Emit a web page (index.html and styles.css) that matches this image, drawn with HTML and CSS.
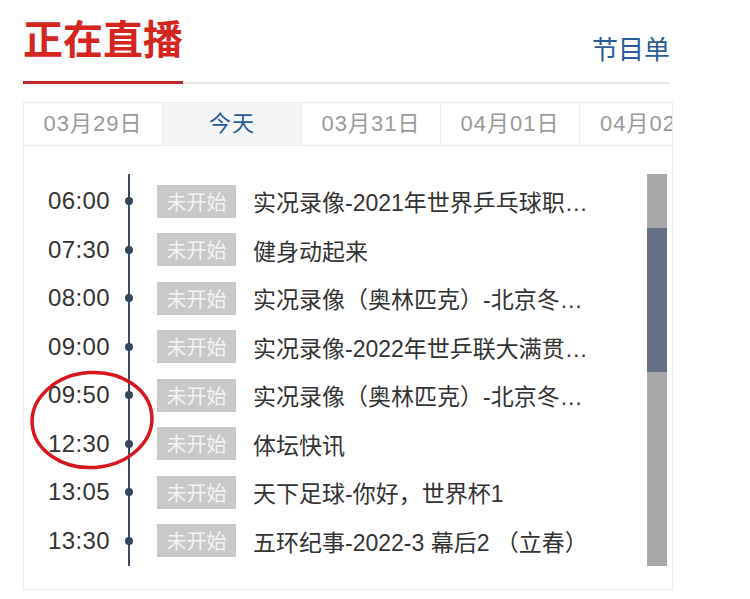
FILE: index.html
```html
<!DOCTYPE html>
<html lang="zh-CN">
<head>
<meta charset="utf-8">
<title>正在直播</title>
<link rel="stylesheet" href="styles.css">
</head>
<body>
<div class="page">
  <header class="header">
    <h1 class="title">正在直播</h1>
    <a class="schedule-link">节目单</a>
  </header>
  <div class="rule">
    <span class="rule-red"></span>
    <span class="rule-gray"></span>
  </div>
  <section class="box">
    <nav class="tabs">
      <div class="tab">03月29日</div>
      <div class="tab tab-active">今天</div>
      <div class="tab">03月31日</div>
      <div class="tab">04月01日</div>
      <div class="tab">04月02日</div>
    </nav>
    <div class="panel">
      <ul class="list">
        <li class="row"><span class="time">06:00</span><span class="dot"></span><span class="badge">未开始</span><span class="name">实况录像-2021年世界乒乓球职业大联盟总决赛</span></li>
        <li class="row"><span class="time">07:30</span><span class="dot"></span><span class="badge">未开始</span><span class="name">健身动起来</span></li>
        <li class="row"><span class="time">08:00</span><span class="dot"></span><span class="badge">未开始</span><span class="name">实况录像（奥林匹克）-北京冬奥会精彩回顾</span></li>
        <li class="row"><span class="time">09:00</span><span class="dot"></span><span class="badge">未开始</span><span class="name">实况录像-2022年世乒联大满贯新加坡站</span></li>
        <li class="row"><span class="time">09:50</span><span class="dot"></span><span class="badge">未开始</span><span class="name">实况录像（奥林匹克）-北京冬奥会精彩回顾</span></li>
        <li class="row"><span class="time">12:30</span><span class="dot"></span><span class="badge">未开始</span><span class="name">体坛快讯</span></li>
        <li class="row"><span class="time">13:05</span><span class="dot"></span><span class="badge">未开始</span><span class="name">天下足球-你好，世界杯1</span></li>
        <li class="row"><span class="time">13:30</span><span class="dot"></span><span class="badge">未开始</span><span class="name">五环纪事-2022-3 幕后2 （立春）</span></li>
      </ul>
      <div class="scrollbar"><div class="thumb"></div></div>
    </div>
  </section>
  <svg class="mark" width="130" height="106" viewBox="0 0 130 106">
    <ellipse cx="63" cy="51" rx="60" ry="47.5" fill="none" stroke="#d8161d" stroke-width="3.5" transform="rotate(-4 63 51)"/>
  </svg>
</div>
</body>
</html>
```
FILE: styles.css
```css
* { box-sizing: border-box; }
html, body { margin: 0; padding: 0; background: #fff; }
body {
  font-family: "Liberation Sans", "Noto Sans CJK SC", sans-serif;
  color: #333;
}
.page {
  position: relative;
  width: 673px;
  padding-left: 23px;
}
.header {
  height: 81px;
  display: flex;
  justify-content: space-between;
  align-items: flex-start;
}
.title {
  margin: 17px 0 0 0;
  font-family: "Noto Sans CJK SC", sans-serif;
  font-size: 40px;
  line-height: 40px;
  font-weight: 700;
  color: #d5251f;
  letter-spacing: 0;
}
.schedule-link {
  margin-top: 35px;
  margin-right: 3px;
  font-family: "Noto Sans CJK SC", sans-serif;
  font-size: 26px;
  line-height: 26px;
  color: #2b5c96;
}
.rule {
  display: flex;
  align-items: center;
  height: 3px;
}
.rule-red {
  width: 160px;
  height: 3px;
  background: #c4282d;
}
.rule-gray {
  flex: 1;
  height: 2px;
  margin-right: 3px;
  background: #e6e6e6;
}
.box {
  margin-top: 18px;
  width: 650px;
  border: 1px solid #ececec;
}
.tabs {
  display: flex;
  overflow: hidden;
  height: 43px;
  border-bottom: 1px solid #ececec;
}
.tab {
  flex: 0 0 139px;
  border-right: 1px solid #ececec;
  text-align: center;
  line-height: 42px;
  font-size: 22px;
  letter-spacing: 1px;
  color: #9a9a9a;
  white-space: nowrap;
}
.tab:last-child { border-right: 0; }
.tab-active {
  background: #f4f5f7;
  color: #2b5c96;
}
.panel {
  display: flex;
  padding: 28px 5px 23px 0;
}
.list {
  flex: 1;
  list-style: none;
  margin: 0;
  padding: 3px 0 1px 0;
  background: linear-gradient(#3d4a5d, #3d4a5d) no-repeat 104px 0 / 2px 100%;
}
.row {
  display: flex;
  align-items: center;
  height: 48.5px;
}
.time {
  width: 86px;
  text-align: right;
  font-size: 24px;
  letter-spacing: 0.4px;
  color: #333;
}
.dot {
  width: 8px;
  height: 8px;
  margin-left: 15px;
  border-radius: 50%;
  background: #34465e;
}
.badge {
  width: 79px;
  height: 33px;
  margin-left: 24px;
  background: #c9c9c9;
  color: #f3f3f3;
  font-family: "Noto Sans CJK SC", sans-serif;
  font-size: 20px;
  line-height: 33px;
  text-align: center;
}
.name {
  width: 345px;
  margin-left: 17px;
  font-size: 23px;
  color: #333;
  white-space: nowrap;
  overflow: hidden;
  text-overflow: ellipsis;
}
.scrollbar {
  width: 20px;
  background: #a9a9a9;
  display: flex;
  flex-direction: column;
}
.thumb {
  margin-top: 54px;
  height: 144px;
  background: #687184;
}
.mark {
  position: absolute;
  left: 29px;
  top: 369px;
}
```
